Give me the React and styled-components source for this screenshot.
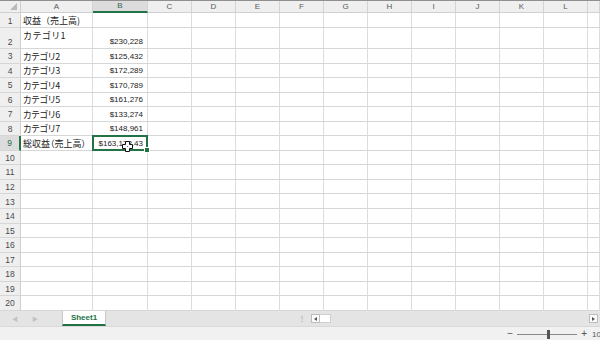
import React from "react";
import styled, { createGlobalStyle, css } from "styled-components";

const Global = createGlobalStyle`
  html, body { margin: 0; padding: 0; background: #ffffff; }
  body { font-family: "Liberation Sans", "Noto Sans CJK JP", sans-serif; overflow: hidden; }
  * { box-sizing: border-box; }
`;

const GREEN = "#217346";

const Window = styled.div`
  width: 600px;
  height: 340px;
  display: flex;
  flex-direction: column;
  overflow: hidden;
  background: #fff;
`;

const Sheet = styled.div`
  position: relative;
  display: grid;
  grid-template-columns: 21px 72px 55px repeat(10, 44px) 1fr;
  grid-template-rows: 12px 15px 21px repeat(18, 14.55px);
  border-top: 1px solid #8f8f8f;
  flex: none;
  height: 311px;
  overflow: hidden;
`;

const Corner = styled.div`
  position: relative;
  background: #efefef;
  border-right: 1px solid #cfcfcf;
  border-bottom: 1px solid #cfcfcf;
  &::after {
    content: "";
    position: absolute;
    right: 3px;
    bottom: 2px;
    width: 0;
    height: 0;
    border-left: 7px solid transparent;
    border-bottom: 7px solid #b9b9b9;
  }
`;

const ColHeader = styled.div`
  background: ${(p) => (p.$active ? "#dcdcdc" : "#efefef")};
  border-right: 1px solid #d3d3d3;
  border-bottom: ${(p) => (p.$active ? `2px solid ${GREEN}` : "1px solid #cfcfcf")};
  color: ${(p) => (p.$active ? "#2e6b4a" : "#5a5a5a")};
  font-size: 8px;
  display: flex;
  align-items: center;
  justify-content: center;
  line-height: 1;
`;

const RowHeader = styled.div`
  background: ${(p) => (p.$active ? "#dcdcdc" : "#efefef")};
  border-right: ${(p) => (p.$active ? `2px solid ${GREEN}` : "1px solid #cfcfcf")};
  border-bottom: 1px solid #d6d6d6;
  color: ${(p) => (p.$active ? "#2e6b4a" : "#4a4a4a")};
  font-size: 8.5px;
  display: flex;
  align-items: flex-end;
  justify-content: center;
  padding-bottom: 2px;
  line-height: 1;
`;

const Cell = styled.div`
  position: relative;
  border-right: 1px solid #dcdcdc;
  border-bottom: 1px solid #d6d6d6;
  display: flex;
  align-items: ${(p) => (p.$top ? "flex-start" : "flex-end")};
  justify-content: ${(p) => (p.$right ? "flex-end" : "flex-start")};
  padding: ${(p) => (p.$top ? "3px 4px 0 2px" : "0 4px 2px 2px")};
  font-size: ${(p) => (p.$right ? "8px" : "9px")};
  color: #222;
  white-space: nowrap;
  line-height: 1;
  font-family: ${(p) =>
    p.$right ? `"Liberation Sans", sans-serif` : `"Noto Sans CJK JP", sans-serif`};
  font-feature-settings: ${(p) => (p.$palt ? `"palt" 1` : "normal")};
  letter-spacing: ${(p) => (p.$spaced ? "0.4px" : "0")};
  ${(p) =>
    p.$selected &&
    css`
      &::after {
        content: "";
        position: absolute;
        left: -1px;
        top: -1px;
        right: -1px;
        bottom: -1px;
        border: 2px solid ${GREEN};
        pointer-events: none;
      }
      &::before {
        content: "";
        position: absolute;
        right: -3px;
        bottom: -3px;
        width: 4px;
        height: 4px;
        background: ${GREEN};
        border: 1px solid #fff;
        z-index: 2;
      }
    `}
`;

const Cursor = styled.svg`
  position: absolute;
  left: 122px;
  top: 140px;
  z-index: 3;
`;

const TabBar = styled.div`
  flex: none;
  height: 16px;
  display: flex;
  align-items: stretch;
  background: #e4e4e4;
  border-bottom: 1px solid #d9d9d9;
`;

const NavArrows = styled.div`
  width: 62px;
  display: flex;
  align-items: center;
  gap: 14px;
  padding-left: 12px;
  color: #c2c2c2;
  font-size: 6px;
`;

const Tab = styled.div`
  width: 44px;
  background: #fff;
  border-left: 1px solid #c9c9c9;
  border-right: 1px solid #c9c9c9;
  border-bottom: 2px solid ${GREEN};
  color: ${GREEN};
  font-size: 8px;
  font-weight: bold;
  display: flex;
  align-items: center;
  justify-content: center;
  font-family: "Liberation Sans", sans-serif;
`;

const Spacer = styled.div`
  flex: 1;
`;

const SplitHandle = styled.div`
  width: 10px;
  margin-right: 4px;
  display: flex;
  align-items: center;
  justify-content: center;
  color: #b5b5b5;
  font-size: 8px;
  font-weight: bold;
`;

const HScroll = styled.div`
  width: 289px;
  display: flex;
  align-items: center;
  padding: 0 2px 0 0;
`;

const ScrollBtn = styled.div`
  width: 9px;
  height: 9px;
  background: #fbfbfb;
  border: 1px solid #bdbdbd;
  display: flex;
  align-items: center;
  justify-content: center;
`;

const Thumb = styled.div`
  width: 11px;
  height: 9px;
  background: #fff;
  border: 1px solid #cfcfcf;
  border-left: none;
`;

const Track = styled.div`
  flex: 1;
`;

const Arrow = styled.div`
  width: 0;
  height: 0;
  border-top: 2.5px solid transparent;
  border-bottom: 2.5px solid transparent;
  ${(p) =>
    p.$dir === "left"
      ? css`border-right: 3px solid #555;`
      : css`border-left: 3px solid #555;`}
`;

const StatusBar = styled.div`
  flex: 1;
  background: #f1f1f1;
  display: flex;
  align-items: center;
  justify-content: flex-end;
  gap: 4px;
  overflow: hidden;
  white-space: nowrap;
  color: #555;
  font-size: 8px;
  padding-top: 1px;
`;

const ZoomSign = styled.span`
  font-size: 10px;
  line-height: 1;
  color: #555;
`;

const Slider = styled.div`
  position: relative;
  width: 60px;
  height: 1px;
  background: #8a8a8a;
`;

const SliderThumb = styled.div`
  position: absolute;
  left: 30px;
  top: -4px;
  width: 3px;
  height: 9px;
  background: #555;
`;

const ZoomText = styled.span`
  width: 8px;
  margin-left: 1px;
  overflow: visible;
`;

const cols = ["A", "B", "C", "D", "E", "F", "G", "H", "I", "J", "K", "L", ""];

const data = [
  { a: "収益（売上高)", b: "" },
  { a: "カテゴリ1", b: "$230,228", top: true, spaced: true },
  { a: "カテゴリ2", b: "$125,432", palt: true },
  { a: "カテゴリ3", b: "$172,289", palt: true },
  { a: "カテゴリ4", b: "$170,789", palt: true },
  { a: "カテゴリ5", b: "$161,276", palt: true },
  { a: "カテゴリ6", b: "$133,274", palt: true },
  { a: "カテゴリ7", b: "$148,961", palt: true },
  { a: "総収益（売上高）", b: "$163,178.43", palt: true },
];

export default function App() {
  const rows = [];
  for (let r = 1; r <= 20; r++) {
    const d = data[r - 1] || { a: "", b: "" };
    const active = r === 9;
    rows.push(
      <RowHeader key={`h${r}`} $active={active}>
        {r}
      </RowHeader>
    );
    rows.push(
      <Cell key={`a${r}`} $top={d.top} $spaced={d.spaced} $palt={d.palt}>
        {d.a}
      </Cell>
    );
    rows.push(
      <Cell key={`b${r}`} $right $selected={active}>
        {d.b}
      </Cell>
    );
    for (let c = 2; c < cols.length; c++) {
      rows.push(<Cell key={`c${r}-${c}`} />);
    }
  }

  return (
    <Window>
      <Global />
      <Sheet>
        <Corner />
        {cols.map((c, i) => (
          <ColHeader key={i} $active={c === "B"}>
            {c}
          </ColHeader>
        ))}
        {rows}
        <Cursor width="11" height="11" viewBox="0 0 11 11">
          <path
            d="M3.5 0.5 H7.5 V3.5 H10.5 V7.5 H7.5 V10.5 H3.5 V7.5 H0.5 V3.5 H3.5 Z"
            fill="#fff"
            stroke="#111"
            strokeWidth="1"
          />
          <rect x="5" y="5" width="1" height="1" fill="#777" />
        </Cursor>
      </Sheet>
      <TabBar>
        <NavArrows>
          <span>◀</span>
          <span>▶</span>
        </NavArrows>
        <Tab>Sheet1</Tab>
        <Spacer />
        <SplitHandle>⋮</SplitHandle>
        <HScroll>
          <ScrollBtn>
            <Arrow $dir="left" />
          </ScrollBtn>
          <Thumb />
          <Track />
          <ScrollBtn>
            <Arrow $dir="right" />
          </ScrollBtn>
        </HScroll>
      </TabBar>
      <StatusBar>
        <ZoomSign>−</ZoomSign>
        <Slider>
          <SliderThumb />
        </Slider>
        <ZoomSign>+</ZoomSign>
        <ZoomText>100%</ZoomText>
      </StatusBar>
    </Window>
  );
}
